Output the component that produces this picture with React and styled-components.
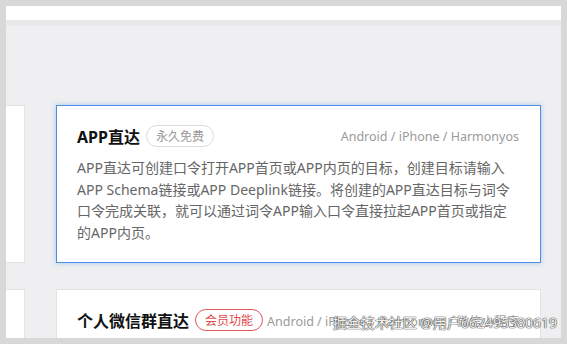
import styled, { createGlobalStyle } from "styled-components";

const GlobalStyle = createGlobalStyle`
    html, body {
        margin: 0;
        padding: 0;
        background: #d8d8d8;
        font-family: "Noto Sans", "Noto Sans CJK SC", sans-serif;
    }
`;

const cards = [
    {
        title: "APP直达",
        tag: "永久免费",
        tone: "free",
        platforms: "Android / iPhone / Harmonyos",
        active: true,
        text: "APP直达可创建口令打开APP首页或APP内页的目标，创建目标请输入APP Schema链接或APP Deeplink链接。将创建的APP直达目标与词令口令完成关联，就可以通过词令APP输入口令直接拉起APP首页或指定的APP内页。",
    },
    {
        title: "个人微信群直达",
        tag: "会员功能",
        tone: "vip",
        platforms: "Android / iPhone / Harmonyos / 微信小程序",
        active: false,
        text: "个人微信群直达可创建口令打开个人微信群的目标，创建目标请上传微信群二维码，将创建的目标与词令口令完成关联。",
    },
];

const App = () => {
    return (
        <>
            <GlobalStyle />
            <Frame>
                <Window>
                    <TopBar />
                    <TopEdge />
                    <Content>
                        {cards.map((c) => (
                            <Row key={c.title}>
                                <Stub />
                                <Card $active={c.active}>
                                    <Header>
                                        <TitleGroup>
                                            <Title>{c.title}</Title>
                                            <Tag $tone={c.tone}>{c.tag}</Tag>
                                        </TitleGroup>
                                        <Platforms>{c.platforms}</Platforms>
                                    </Header>
                                    <Desc>{c.text}</Desc>
                                </Card>
                            </Row>
                        ))}
                    </Content>
                </Window>
                <Watermark>掘金技术社区 @用户662495380619</Watermark>
            </Frame>
        </>
    );
};

export default App;

const Frame = styled.div`
    position: relative;
    width: 567px;
    height: 344px;
    padding: 6px;
    box-sizing: border-box;
    background: #d8d8d8;
    overflow: hidden;
`;

const Window = styled.div`
    width: 555px;
    height: 332px;
    background: #efeff1;
    overflow: hidden;
    display: flex;
    flex-direction: column;
`;

const TopBar = styled.div`
    height: 14px;
    background: #fff;
    flex-shrink: 0;
`;

const TopEdge = styled.div`
    height: 6px;
    background: #e9e9eb;
    flex-shrink: 0;
`;

const Content = styled.div`
    padding-top: 79px;
    display: flex;
    flex-direction: column;
    gap: 26px;
`;

const Row = styled.div`
    display: flex;
    gap: 31px;
`;

const Stub = styled.div`
    width: 18px;
    flex-shrink: 0;
    background: #fff;
    border: 1px solid #e3e3e5;
    border-left: none;
`;

const Card = styled.div`
    width: 485px;
    box-sizing: border-box;
    flex-shrink: 0;
    background: #fff;
    padding: 19px 20px;
    border: 1px solid ${(p) => (p.$active ? "#4d8fe6" : "#e3e3e5")};
    box-shadow: ${(p) => (p.$active ? "0 0 5px rgba(77, 143, 230, 0.45)" : "none")};
`;

const Header = styled.div`
    display: flex;
    justify-content: space-between;
    align-items: center;
    height: 22px;
`;

const TitleGroup = styled.div`
    display: flex;
    align-items: center;
    gap: 6px;
`;

const Title = styled.span`
    font-size: 16px;
    font-weight: 700;
    color: #111;
    white-space: nowrap;
`;

const Tag = styled.span`
    height: 22px;
    box-sizing: border-box;
    padding: 0 9px;
    border-radius: 11px;
    display: inline-flex;
    align-items: center;
    font-size: 12px;
    white-space: nowrap;
    border: 1px solid ${(p) => (p.$tone === "vip" ? "#e0585b" : "#dcdcdc")};
    color: ${(p) => (p.$tone === "vip" ? "#e0484c" : "#9a9a9a")};
`;

const Platforms = styled.span`
    font-size: 12.5px;
    color: #9a9a9a;
    white-space: nowrap;
    margin-right: 1px;
`;

const Desc = styled.p`
    margin: 10px 0 0;
    font-size: 14px;
    line-height: 21.5px;
    color: #666;
`;

const Watermark = styled.div`
    position: absolute;
    right: 10px;
    bottom: 12px;
    font-size: 14px;
    color: rgba(255, 255, 255, 0.92);
    text-shadow: 0 0 1px #444, 0 0 1px #444, 0 0 1px #666;
    white-space: nowrap;
`;
